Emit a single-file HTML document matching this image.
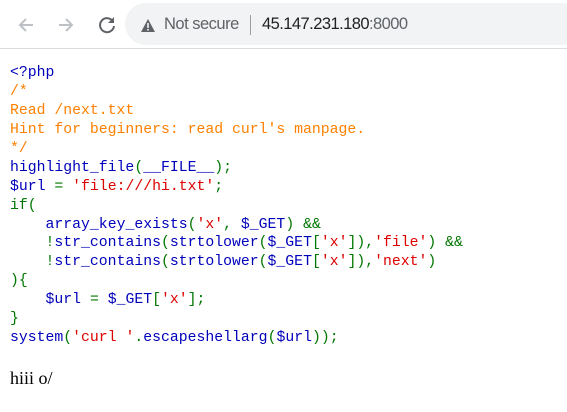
<!DOCTYPE html>
<html><head><meta charset="utf-8"><style>
html,body{margin:0;padding:0;background:#fff;width:567px;height:412px;overflow:hidden}
.bar{position:absolute;left:0;top:0;width:567px;height:48px;background:#fff;border-bottom:1px solid #dadce0}
.omni{position:absolute;left:125px;top:3px;width:460px;height:42px;border-radius:21px;background:#f1f3f4}
.t{position:absolute;top:15px;font:16.5px "Liberation Sans",sans-serif;color:#5f6368;white-space:nowrap}
pre{position:absolute;left:10px;top:64px;margin:0;font:14.8px/18.93px "Liberation Mono",monospace;color:#0000BB}
.k{color:#007700}.s{color:#DD0000}.c{color:#FF8000}
.hi{position:absolute;left:10px;top:368px;font:18px "Liberation Serif",serif;color:#000}
</style></head><body>
<div class="bar">
<svg style="position:absolute;left:16px;top:15px" width="20" height="20" viewBox="0 0 20 20"><path d="M17 10H4M10 4L4 10l6 6" stroke="#bdc1c6" stroke-width="2" fill="none"/></svg>
<svg style="position:absolute;left:56px;top:15px" width="20" height="20" viewBox="0 0 20 20"><path d="M3 10h13M10 4l6 6-6 6" stroke="#bdc1c6" stroke-width="2" fill="none"/></svg>
<svg style="position:absolute;left:96px;top:14px" width="22" height="22" viewBox="0 0 22 22"><path d="M17 7.5A7 7 0 1 0 18 12" stroke="#5f6368" stroke-width="2" fill="none"/><path d="M18 3v6h-6z" fill="#5f6368"/></svg>
<div class="omni"></div>
<svg style="position:absolute;left:140px;top:18px" width="16" height="15" viewBox="0 0 16 15"><path d="M8 1L15 14H1z" fill="#5f6368"/><rect x="7.2" y="5" width="1.6" height="5" fill="#f1f3f4"/><rect x="7.2" y="11" width="1.6" height="1.6" fill="#f1f3f4"/></svg>
<div class="t" style="left:164px;letter-spacing:-0.5px">Not secure</div>
<div style="position:absolute;left:250px;top:15px;width:1px;height:20px;background:#9aa0a6"></div>
<div class="t" style="left:262px;letter-spacing:-0.55px"><span style="color:#202124">45.147.231.180</span>:8000</div>
</div>
<pre>&lt;?php
<span class="c">/*
Read /next.txt
Hint for beginners: read curl's manpage.
*/</span>
highlight_file<span class="k">(</span>__FILE__<span class="k">);</span>
$url <span class="k">= </span><span class="s">'file:///hi.txt'</span><span class="k">;
if(
    </span>array_key_exists<span class="k">(</span><span class="s">'x'</span><span class="k">, </span>$_GET<span class="k">) &amp;&amp;
    !</span>str_contains<span class="k">(</span>strtolower<span class="k">(</span>$_GET<span class="k">[</span><span class="s">'x'</span><span class="k">]),</span><span class="s">'file'</span><span class="k">) &amp;&amp;
    !</span>str_contains<span class="k">(</span>strtolower<span class="k">(</span>$_GET<span class="k">[</span><span class="s">'x'</span><span class="k">]),</span><span class="s">'next'</span><span class="k">)
){
    </span>$url <span class="k">= </span>$_GET<span class="k">[</span><span class="s">'x'</span><span class="k">];
}
</span>system<span class="k">(</span><span class="s">'curl '</span><span class="k">.</span>escapeshellarg<span class="k">(</span>$url<span class="k">));</span></pre>
<div class="hi">hiii o/</div>
</body></html>
